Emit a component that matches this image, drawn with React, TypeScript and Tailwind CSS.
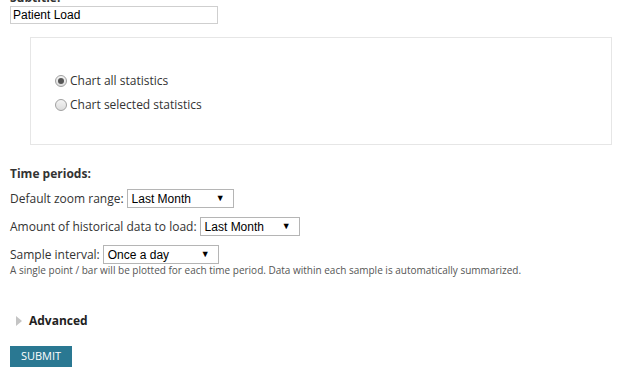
import React from 'react';

const Radio = ({ checked, label }: { checked?: boolean; label: string }) => (
  <label className="flex items-center h-[24px]">
    <span className="w-[12px] h-[12px] rounded-full border border-[#a0a0a0] bg-gradient-to-b from-[#f4f4f4] to-[#dcdcdc] flex items-center justify-center mr-[3px]">
      {checked && <span className="w-[6px] h-[6px] rounded-full bg-[#555]" />}
    </span>
    <span>{label}</span>
  </label>
);

// Fake select box to match the old-style dropdown look
const Select = ({ value, width }: { value: string; width: string }) => (
  <div
    className={`${width} h-[19px] border border-[#b5b5b5] bg-white flex items-center justify-between pl-[4px] pr-[8px] text-[12px] text-black`}
    style={{ fontFamily: '"Liberation Sans", Arial, sans-serif' }}
  >
    <span>{value}</span>
    <span className="text-[9px]">▼</span>
  </div>
);

export default function App() {
  return (
    <div
      className="bg-white w-[628px] h-[389px] overflow-hidden text-[12px] text-[#333]"
      style={{ fontFamily: '"Open Sans", sans-serif' }}
    >
      <div className="-mt-[11px] px-[10px]">
        {/* Subtitle */}
        <div className="font-bold text-[12px] leading-[17px]">Subtitle:</div>
        <div
          className="w-[208px] h-[18px] border border-[#cfcfcf] flex items-center pl-[2px] text-[12px] text-black"
          style={{ fontFamily: '"Liberation Sans", Arial, sans-serif' }}
        >
          Patient Load
        </div>

        {/* Statistics box */}
        <div className="ml-[20px] mt-[13px] w-[582px] h-[108px] border border-[#e6e6e6] pt-[31px] pl-[24px]">
          <Radio checked label="Chart all statistics" />
          <Radio label="Chart selected statistics" />
        </div>

        {/* Time periods */}
        <div className="mt-[20px] font-bold leading-[17px]">Time periods:</div>
        <div className="mt-[7px] flex items-center gap-[3px] h-[19px]">
          <span>Default zoom range:</span>
          <Select value="Last Month" width="w-[107px]" />
        </div>
        <div className="mt-[9px] flex items-center gap-[3px] h-[19px]">
          <span>Amount of historical data to load:</span>
          <Select value="Last Month" width="w-[100px]" />
        </div>
        <div className="mt-[9px] flex items-center gap-[3px] h-[19px]">
          <span>Sample interval:</span>
          <Select value="Once a day" width="w-[116px]" />
        </div>
        <div className="text-[10px] text-[#555] leading-[13px]">
          A single point / bar will be plotted for each time period. Data within each sample is automatically summarized.
        </div>

        {/* Advanced */}
        <div className="mt-[36px] flex items-center h-[16px]">
          <svg width="6" height="10" viewBox="0 0 6 10" className="ml-[6px] mr-[7px]">
            <polygon points="0,0 6,5 0,10" fill="#c4c4c4" />
          </svg>
          <span className="font-bold text-[#222] text-[12px]">Advanced</span>
        </div>

        <button className="mt-[17px] w-[62px] h-[21px] bg-[#2a7892] text-white text-[11px] uppercase flex items-center justify-center">
          Submit
        </button>
      </div>
    </div>
  );
}
